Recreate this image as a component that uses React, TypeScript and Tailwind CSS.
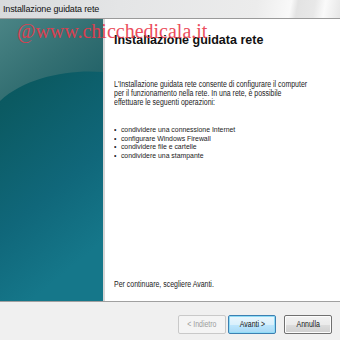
import React from "react";

function LeftPanel() {
  return (
    <svg viewBox="0 0 103 282" preserveAspectRatio="none" className="block w-full h-full">
      <defs>
        <linearGradient id="lpBg" x1="0" y1="0" x2="0.3" y2="1">
          <stop offset="0" stopColor="#08535a" />
          <stop offset="0.3" stopColor="#0b5a62" />
          <stop offset="0.7" stopColor="#10677a" />
          <stop offset="1" stopColor="#15778a" />
        </linearGradient>
        <linearGradient id="lpUp" x1="0" y1="0" x2="1" y2="1">
          <stop offset="0" stopColor="#4a8485" />
          <stop offset="0.5" stopColor="#336f72" />
          <stop offset="1" stopColor="#1c5e65" />
        </linearGradient>
      </defs>
      <rect x="0" y="0" width="103" height="282" fill="url(#lpBg)" />
      <path d="M0 0 H103 V53 C70 50 25 58 0 82 Z" fill="url(#lpUp)" />
    </svg>
  );
}

function Btn({ label, variant }: { label: string; variant: "disabled" | "default" | "normal" }) {
  const cls =
    variant === "disabled"
      ? "border-[#c9c9c9] bg-[#f4f4f4] text-[#9c9c9c]"
      : variant === "default"
      ? "border-[#3c7fb1] bg-[linear-gradient(#eaf6fd,#d9f0fc_50%,#bee6fd_51%,#a7d9f5)] text-[#111] shadow-[inset_0_0_0_1px_#8fdcf7]"
      : "border-[#707070] bg-[linear-gradient(#f2f2f2,#ebebeb_50%,#dddddd_51%,#cfcfcf)] text-[#111] shadow-[inset_0_0_0_1px_#fcfcfc]";
  return (
    <div className={`w-[48px] h-[19px] rounded-[2px] border flex items-center justify-center ${cls}`}>
      <span className="inline-block text-[8.5px] leading-[9px] whitespace-nowrap scale-x-[0.82]">{label}</span>
    </div>
  );
}

export default function App() {
  return (
    <div className="relative w-[340px] h-[340px] overflow-hidden bg-[#f0f0f0] flex flex-col font-['Liberation_Sans',Arial,sans-serif]">
      {/* title bar */}
      <div className="h-[19px] shrink-0 border-b border-[#9a9a9a] bg-[linear-gradient(100deg,#d8dadc_0%,#e4e5e6_35%,#ececec_75%,#f9f9f9_85%,#e3e3e3_87%,#e8e8e8_92%,#fafafa_95%,#e6e6e6_100%)] pl-[3px] pt-[4px]">
        <div className="text-[9px] leading-[10px] text-[#111] tracking-[-0.15px] whitespace-nowrap">
          Installazione guidata rete
        </div>
      </div>

      {/* main */}
      <div className="h-[282px] shrink-0 flex">
        <div className="w-[103px] shrink-0">
          <LeftPanel />
        </div>
        <div className="w-[2px] shrink-0 bg-[#d6d6d6]" />
        <div className="flex-1 bg-white flex flex-col pl-[9px] pt-[14px] pb-[12px] overflow-hidden text-[#1a1a1a]">
          <div className="text-[12.5px] leading-[15px] font-bold text-[#111] whitespace-nowrap">
            Installazione guidata rete
          </div>
          <div className="mt-[32px] text-[8.5px] leading-[9px] whitespace-nowrap origin-left scale-x-[0.82]">
            <div>L'Installazione guidata rete consente di configurare il computer</div>
            <div>per il funzionamento nella rete. In una rete, è possibile</div>
            <div>effettuare le seguenti operazioni:</div>
          </div>
          <div className="mt-[19px] text-[8px] leading-[8.5px] whitespace-nowrap origin-left scale-x-[0.86]">
            {[
              "condividere una connessione Internet",
              "configurare Windows Firewall",
              "condividere file e cartelle",
              "condividere una stampante",
            ].map((t) => (
              <div key={t} className="flex">
                <span className="w-[8px]">•</span>
                <span>{t}</span>
              </div>
            ))}
          </div>
          <div className="mt-auto text-[8.5px] leading-[9px] whitespace-nowrap origin-left scale-x-[0.82]">
            Per continuare, scegliere Avanti.
          </div>
        </div>
      </div>

      {/* bottom */}
      <div className="flex-1 border-t border-[#a0a0a0] bg-[#f0f0f0] flex justify-end items-start pt-[13px] pr-[8px]">
        <Btn label="< Indietro" variant="disabled" />
        <div className="w-[2px]" />
        <Btn label="Avanti >" variant="default" />
        <div className="w-[8px]" />
        <Btn label="Annulla" variant="normal" />
      </div>

      {/* watermark */}
      <div className="absolute left-[17px] top-[21px] text-[20px] leading-[20px] text-[#ea3a4c] opacity-90 whitespace-nowrap font-['Liberation_Serif',serif] pointer-events-none">
        @www.chicchedicala.it
      </div>
    </div>
  );
}
